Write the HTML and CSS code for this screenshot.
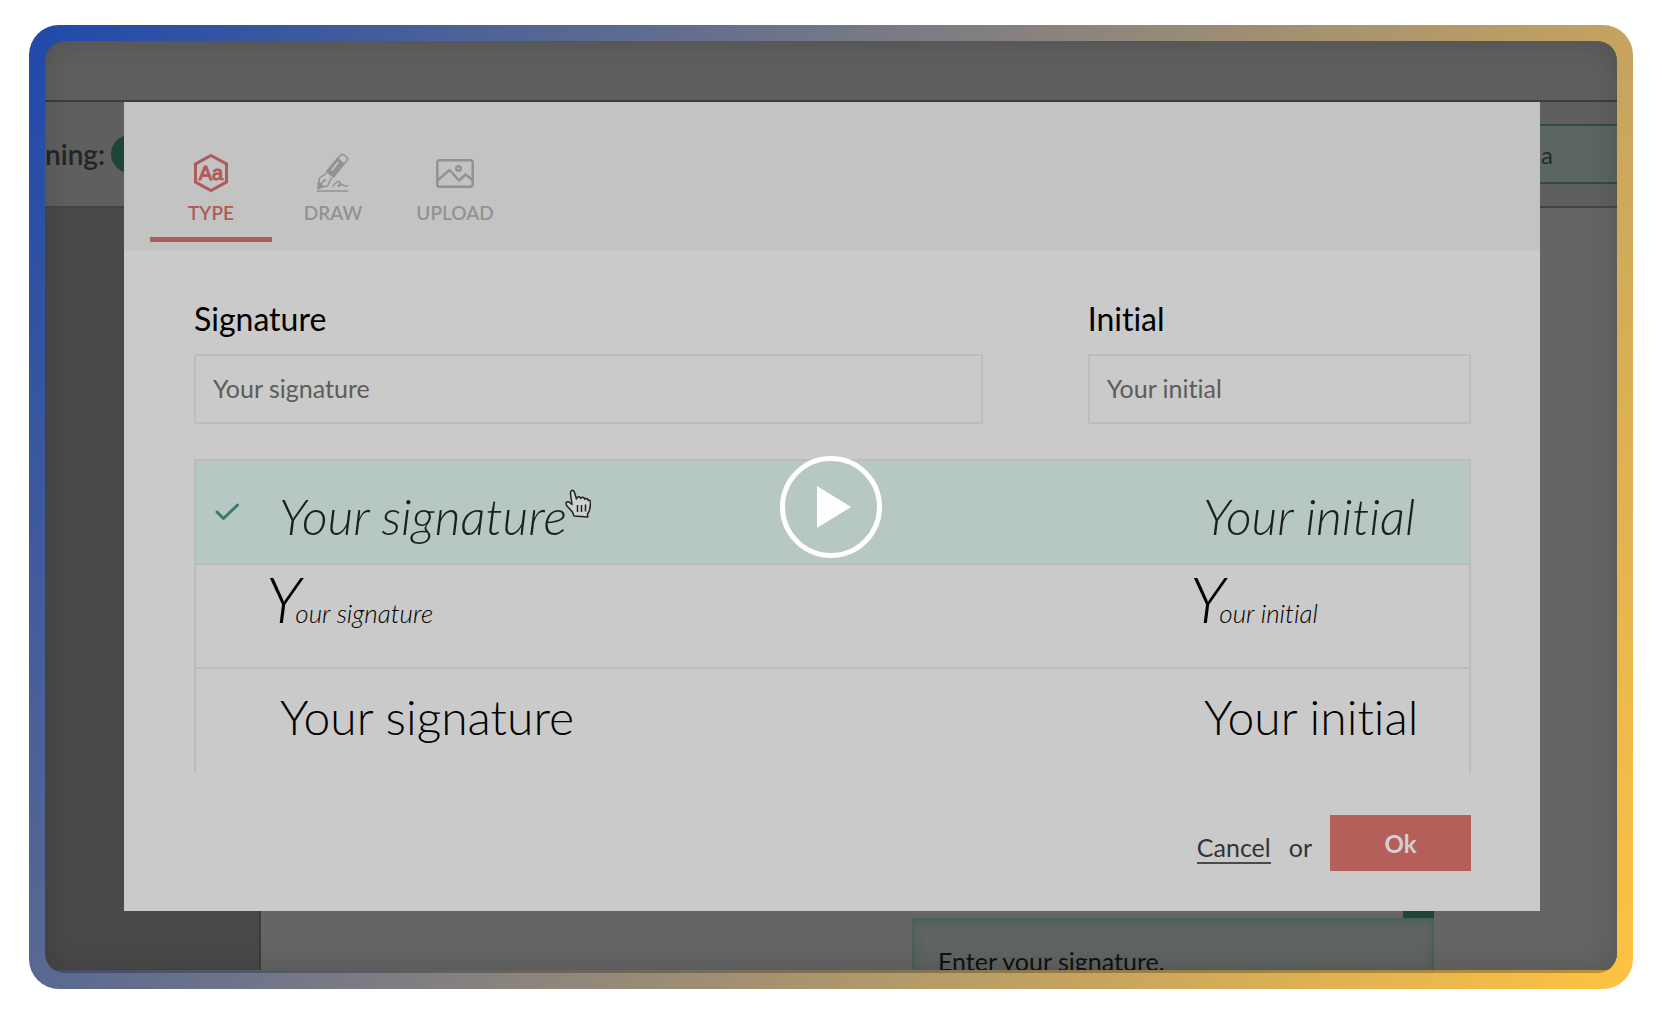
FILE: index.html
```html
<!DOCTYPE html>
<html lang="en">
<head>
<meta charset="utf-8">
<meta name="viewport" content="width=device-width, initial-scale=1">
<title>Signing demo video</title>
<link rel="stylesheet" href="styles.css">
</head>
<body>
<main class="frame">
  <div class="stage">
    <div class="page">
      <div class="topbar"></div>
      <div class="toolbar">
        <span class="signing-label">ning:</span>
        <span class="signer-badge"></span>
        <span class="signer-box">a</span>
      </div>
      <div class="workspace">
        <div class="sidebar"></div>
        <div class="document">
          <div class="field-tag"></div>
          <div class="field">Enter your signature.</div>
        </div>
      </div>
    </div>

    <section class="modal" aria-label="Add your signature">
      <nav class="tabs">
        <button class="tab tab-active" type="button">
          <svg class="tab-icon" viewBox="0 0 40 40" fill="none" stroke="currentColor" stroke-width="3">
            <path d="M20 2.500 35.500 11v18L20 37.500 4.500 29V11z"/>
            <text class="icon-text" x="20" y="27" text-anchor="middle">Aa</text>
          </svg>
          TYPE
        </button>
        <button class="tab" type="button">
          <svg class="tab-icon" viewBox="0 0 40 40" fill="none" stroke="currentColor" stroke-width="1.500" stroke-linecap="round" stroke-linejoin="round">
            <path d="M24.500 5.500 28 2q1.500-1.200 3 0l3 2.500q1.300 1.300 0 3L31 11"/>
            <path d="M24.500 5.500 31 11 20.500 24 13.500 18.500z" fill="currentColor"/>
            <path d="M19 17l6-7.500" stroke="#c3c3c3" stroke-width="1.800"/>
            <path d="M13 20.500 6.500 25 5.500 35l9-2 4-8M5.500 34.500l5-6.500M11.500 26.500l1 1.500"/>
            <path d="M5.500 29 4.800 36l5-3z" fill="currentColor"/>
            <path d="M20 33c3-4 6-5.500 7-4 .7 1.500-2.500 4-1.500 4.300 1.500.3 2-2 3.500-2 1.300 0 0 2 5.500 1.700M4.500 38h30"/>
          </svg>
          DRAW
        </button>
        <button class="tab" type="button">
          <svg class="tab-icon" viewBox="0 0 40 40" fill="none" stroke="currentColor" stroke-width="2.500" stroke-linejoin="round">
            <rect x="2.300" y="7.300" width="35.400" height="26.400" rx="2.500"/>
            <path d="M2.500 27.500 14.500 17l9.500 10.500 6.500-6 7 5.500"/>
            <circle cx="23.500" cy="15.500" r="2.300"/>
          </svg>
          UPLOAD
        </button>
      </nav>

      <form class="modal-body">
        <div class="fields">
          <div class="entry">
            <label class="entry-label" for="signature">Signature</label>
            <input class="entry-input" id="signature" type="text" placeholder="Your signature">
          </div>
          <div class="entry">
            <label class="entry-label" for="initial">Initial</label>
            <input class="entry-input" id="initial" type="text" placeholder="Your initial">
          </div>
        </div>

        <div class="options" role="radiogroup" aria-label="Signature style">
          <label class="option">
            <input class="option-radio" type="radio" name="style" checked>
            <svg class="option-check" viewBox="0 0 24 18" fill="none" stroke="#357e69" stroke-width="3" stroke-linecap="round" stroke-linejoin="round"><path d="M2 9l6.500 6.500L22.500 2"/></svg>
            <span class="script script-flowing">Your signature</span>
            <span class="script script-flowing">Your initial</span>
            <svg class="hand" viewBox="0 0 26 30" fill="#d2d2d2" stroke="#222" stroke-width="1.500" stroke-linejoin="round">
              <path d="M9 27 7.500 23 2 17C0 14 1.500 12 4 13l3 2.500L5.500 5C5 1 8.500 0 9.500 3.500l2 6.500c.5-3 3.500-3 4.200-.5.800-2 3.500-1.500 4 .8 1-1.300 3-1 3.600 1.200 1.200-.7 2.200 0 2.200 1.500 0 5-.5 9-3 12l.3 3z"/>
              <path d="M12.500 16v7M16.500 16v7M20.500 15.500v7" fill="none"/>
            </svg>
          </label>
          <label class="option">
            <input class="option-radio" type="radio" name="style">
            <span class="script script-capital">Your signature</span>
            <span class="script script-capital">Your initial</span>
          </label>
          <label class="option">
            <input class="option-radio" type="radio" name="style">
            <span class="script script-upright">Your signature</span>
            <span class="script script-upright">Your initial</span>
          </label>
        </div>

        <div class="actions">
          <a class="cancel" href="#">Cancel</a>
          <span class="or">or</span>
          <button class="ok" type="button">Ok</button>
        </div>
      </form>
    </section>

    <button class="play" type="button" aria-label="Play video">
      <svg class="play-icon" viewBox="0 0 34 42" fill="#fff"><path d="M0 0v42L34 21z"/></svg>
    </button>
  </div>
</main>
</body>
</html>
```
FILE: styles.css
```css
* {
  box-sizing: border-box;
}

body {
  margin: 25px 29px 33px;
  background: #fff;
  color: #000;
  font-family: Lato, "Liberation Sans", sans-serif;
  font-variant-ligatures: none;
}

button,
input {
  font-family: inherit;
  font-variant-ligatures: none;
}

.frame {
  padding: 16px;
  border-radius: 30px;
  background: linear-gradient(120deg, #1f49ab, #8f867b 50%, #ffc342);
}

/* Backdrop page, dialog and play button share one grid cell */
.stage {
  display: grid;
  overflow: hidden;
  border-radius: 20px;
  background: rgba(0, 0, 0, 0.25);
}

.page,
.modal,
.play {
  grid-area: 1 / 1;
}

.page {
  position: relative;
  display: flex;
  flex-direction: column;
  min-width: 0;
  margin-bottom: 3px;
  overflow: hidden;
  background: #5f5f5f;
}

.page::after {
  position: absolute;
  inset: 0;
  box-shadow: inset 0 0 32px rgba(0, 0, 0, 0.16);
  content: "";
}

.topbar {
  height: 61px;
  border-bottom: 2px solid #3d3d3d;
}

.toolbar {
  display: flex;
  align-items: center;
  height: 106px;
  border-bottom: 2px solid #454545;
}

.signing-label {
  color: #222625;
  font-size: 28px;
  font-weight: 600;
}

.signer-badge {
  width: 80px;
  height: 38px;
  margin-left: 6px;
  border-radius: 19px;
  background: #1f4537;
}

.signer-box {
  width: 122px;
  height: 60px;
  margin-left: auto;
  padding-left: 44px;
  border: 2px solid #2f4d43;
  border-right: 0;
  background: #5b6561;
  color: #262a29;
  font-size: 24px;
  line-height: 58px;
}

.workspace {
  display: flex;
  flex: 1;
}

.sidebar {
  width: 216px;
  border-right: 2px solid #3d3d3d;
  background: #494949;
}

.document {
  display: flex;
  flex: 1;
  flex-direction: column;
  align-items: flex-end;
  justify-content: flex-end;
  padding-right: 183px;
  background: #656565;
}

.field-tag {
  width: 31px;
  height: 24px;
  background: #1f4537;
}

.field {
  width: 522px;
  height: 52px;
  padding: 26px 24px 0;
  overflow: hidden;
  border: 2px solid #4a6058;
  border-bottom: 0;
  background: #606462;
  box-shadow: inset 0 2px 10px #4a6058;
  color: #111;
  font-size: 25px;
  line-height: 30px;
}

.modal {
  z-index: 1;
  min-width: 0;
  margin: 61px 77px 62px 79px;
  background: #cacaca;
}

.tabs {
  display: flex;
  height: 148px;
  padding: 49px 26px 8px;
  background: #c3c3c3;
}

.tab {
  display: flex;
  flex-direction: column;
  align-items: center;
  gap: 8px;
  width: 122px;
  padding: 2px 0 0;
  border: 0;
  border-bottom: 5px solid transparent;
  background: none;
  color: #929292;
  font-size: 19px;
  font-weight: 600;
  line-height: 24px;
}

.tab-active {
  border-color: #ae5b5a;
  color: #ae5b5a;
}

.tab-icon {
  width: 40px;
  height: 40px;
}

.icon-text {
  fill: currentColor;
  stroke: currentColor;
  stroke-width: 1px;
  font-family: "Liberation Sans", sans-serif;
  font-size: 20px;
  font-weight: 400;
}

.modal-body {
  padding: 50px 69px 40px 70px;
}

.fields {
  display: grid;
  grid-template-columns: 788fr 383fr;
  gap: 105px;
}

.entry {
  display: grid;
  gap: 16px;
}

.entry-label {
  font-size: 32px;
  line-height: 38px;
}

.entry-input {
  width: 100%;
  height: 70px;
  padding: 0 17px 2px;
  border: 2px solid #bdbdbd;
  border-radius: 0;
  background: transparent;
  color: #5c5c5c;
  font-size: 25px;
}

.entry-input::placeholder {
  color: #5c5c5c;
  opacity: 1;
}

.options {
  margin-top: 35px;
  border: 2px solid #bcbcbc;
  border-bottom: 0;
}

.option {
  position: relative;
  display: grid;
  grid-template-columns: 70px 1fr 279px;
  align-items: center;
  height: 104px;
  border-bottom: 2px solid #bcbcbc;
}

.option:has(:checked) {
  background: #b7c8c4;
}

.option:last-child {
  border-bottom: 0;
}

.option-radio {
  grid-area: 1 / 1;
  width: 24px;
  height: 24px;
  margin: 0 0 0 19px;
  appearance: none;
}

.option-check {
  grid-area: 1 / 1;
  width: 24px;
  height: 18px;
  margin-left: 19px;
}

.script {
  font-weight: 300;
  white-space: nowrap;
}

.script-flowing {
  padding: 8px 0 0 13px;
  color: #1c1f1e;
  font-size: 50px;
  font-style: italic;
}

.script-capital {
  padding-bottom: 20px;
  font-size: 26px;
  font-style: italic;
  line-height: 60px;
}

.script-capital::first-letter {
  margin-right: -6px;
  font-size: 64px;
}

.script-upright {
  padding: 0 0 10px 14px;
  font-size: 48px;
}

/* Pointer resting on the highlighted row */
.hand {
  position: absolute;
  top: 28px;
  left: 369px;
  width: 26px;
  height: 30px;
}

.actions {
  display: flex;
  align-items: center;
  justify-content: flex-end;
  gap: 18px;
  margin-top: 42px;
  font-size: 25px;
  line-height: 30px;
}

.cancel {
  margin-top: 10px;
  border-bottom: 2px solid #4a4a4a;
  color: #333;
  text-decoration: none;
}

.or {
  margin-top: 8px;
  color: #333;
}

.ok {
  width: 141px;
  height: 56px;
  padding: 0;
  border: 0;
  background: #b55f5b;
  color: #d2d0d0;
  font-size: 24px;
  font-weight: 700;
}

.play {
  z-index: 2;
  display: flex;
  align-items: center;
  justify-content: center;
  place-self: center;
  width: 102px;
  height: 102px;
  padding: 0 0 0 6px;
  border: 5px solid #fff;
  border-radius: 50%;
  background: none;
}

.play-icon {
  width: 34px;
  height: 42px;
}
```
